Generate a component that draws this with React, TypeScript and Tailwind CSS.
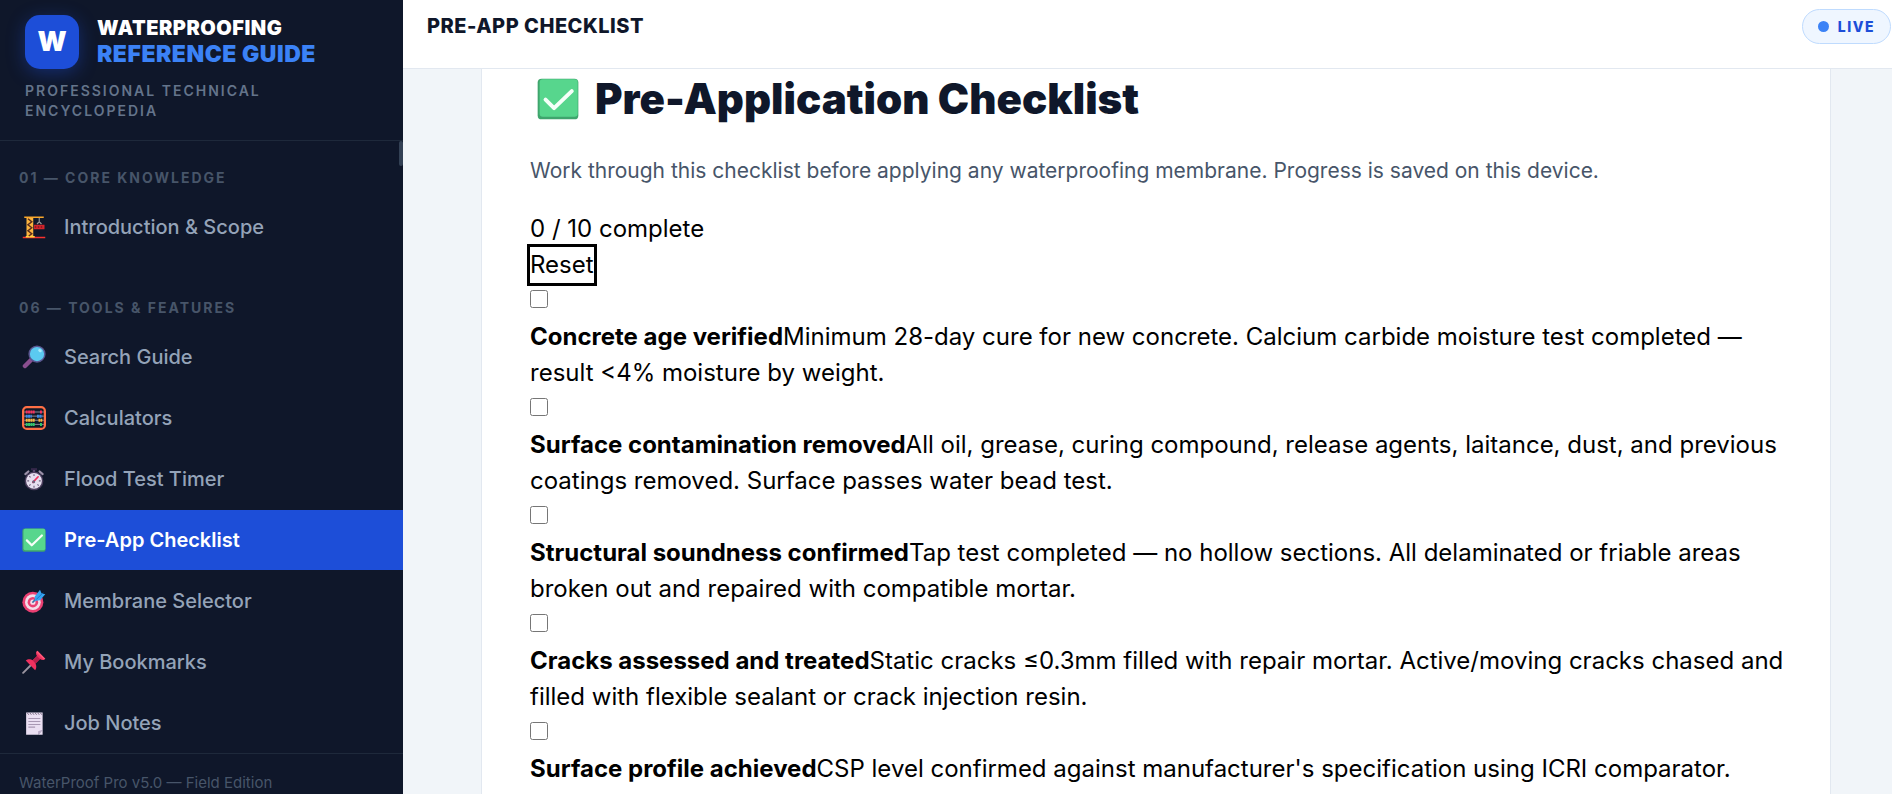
import { useState } from 'react'

const CraneIcon = () => (
  <svg className="w-6 h-6" viewBox="0 0 32 32" aria-hidden="true">
    <path d="M1 29h30v2H1z" fill="#f8312f" />
    <path d="M5 28h12v2H5z" fill="#fcd53f" />
    <path d="M6 3h9v25H6z" fill="#fcb53f" />
    <path d="M8 5l5 4-5 4 5 4-5 4 5 4-4 3" fill="none" stroke="#5a2e1a" strokeWidth="2" />
    <path d="M3 2h26v2H3z" fill="#f9a72b" />
    <path d="M23 4v5m-3 3l3-3 3 3" fill="none" stroke="#9b9b9b" strokeWidth="1.5" />
    <path d="M16 13h14v6H16z" fill="#d3242b" />
    <path d="M17 16h12" stroke="#7b1820" strokeWidth="2" strokeDasharray="2 2" />
  </svg>
)

const SearchIcon = () => (
  <svg className="w-6 h-6" viewBox="0 0 32 32" aria-hidden="true">
    <path d="M4 28l9-9" stroke="#8a4f8f" strokeWidth="6" strokeLinecap="round" />
    <path d="M12 20l3-3" stroke="#6b4a91" strokeWidth="3" />
    <circle cx="20" cy="12" r="11.5" fill="#5a5791" />
    <circle cx="20" cy="12" r="9.5" fill="#5bcaf0" />
    <ellipse cx="24" cy="7.5" rx="2.5" ry="2" fill="#a9ecfb" transform="rotate(35 24 7.5)" />
  </svg>
)

const AbacusIcon = () => (
  <svg className="w-6 h-6" viewBox="0 0 32 32" aria-hidden="true">
    <rect x="1.5" y="1.5" width="29" height="29" rx="5" fill="#111827" stroke="#ff6f45" strokeWidth="3" />
    <path d="M3 8h26M3 13.5h26M3 19h26M3 24.5h26" stroke="#b4acbc" strokeWidth="1" />
    <path d="M5 8h12m7 0h3" stroke="#f8315f" strokeWidth="4" strokeDasharray="2.6 .5" />
    <path d="M5 13.5h8m7 0h7" stroke="#3f8ce8" strokeWidth="4" strokeDasharray="2.6 .5" />
    <path d="M5 19h12m5 0h5" stroke="#fcb53f" strokeWidth="4" strokeDasharray="2.6 .5" />
    <path d="M5 24.5h12m7 0h3" stroke="#2fc96b" strokeWidth="4" strokeDasharray="2.6 .5" />
  </svg>
)

const StopwatchIcon = () => (
  <svg className="w-6 h-6" viewBox="0 0 32 32" aria-hidden="true">
    <path d="M12 1.5h8v3h-8z" fill="#35284a" />
    <path d="M14.5 4h3v4h-3z" fill="#5a4a70" />
    <path d="M4.5 9.5l4-3.500M27.500 9.500l-4-3.500" stroke="#9a90a8" strokeWidth="3" strokeLinecap="round" />
    <circle cx="16" cy="18.5" r="12.5" fill="#4a3d5c" />
    <circle cx="16" cy="18.5" r="10.5" fill="#e6dff0" />
    <path d="M16 9.5v2.5M16 25v2.5M7 18.5h2.5M22.5 18.5H25M9.7 12.2l1.7 1.7M9.7 24.8l1.7-1.7M22.3 24.8l-1.7-1.7" stroke="#70607f" strokeWidth="1.5" />
    <path d="M14.5 20.5l7-7.5" stroke="#f0335f" strokeWidth="2.2" strokeLinecap="round" />
    <circle cx="15.5" cy="19.5" r="2" fill="#70607f" />
  </svg>
)

const CheckIcon = ({ className = 'w-6 h-6' }: { className?: string }) => (
  <svg className={className} viewBox="0 0 32 32" aria-hidden="true">
    <rect x="0.5" y="0.5" width="31" height="31" rx="3" fill="#3fa56d" />
    <rect x="2" y="1" width="29" height="28.5" rx="2.5" fill="#57d68d" />
    <path d="M6.5 16.500l6.500 6.500L26.500 10" fill="none" stroke="#f6fff9" strokeWidth="3" strokeLinecap="round" strokeLinejoin="round" />
  </svg>
)

const TargetIcon = () => (
  <svg className="w-6 h-6" viewBox="0 0 32 32" aria-hidden="true">
    <circle cx="14.5" cy="17.5" r="14" fill="#ea3f72" />
    <circle cx="14.5" cy="17.5" r="10.5" fill="#f3dce8" />
    <circle cx="14.5" cy="17.5" r="7" fill="#ea3f72" />
    <circle cx="14.5" cy="17.5" r="3.5" fill="#f3dce8" />
    <path d="M14.5 17.5l8-8" stroke="#346fa5" strokeWidth="2" strokeLinecap="round" />
    <path d="M17 10l7-9 2 4.500L31 7l-7 8-7 1z" fill="#35a5f2" />
    <path d="M19 14l9-9" stroke="#1c72bf" strokeWidth="1.2" />
  </svg>
)

const PinIcon = () => (
  <svg className="w-6 h-6" viewBox="0 0 32 32" aria-hidden="true">
    <path d="M1.5 30.500L13 19" stroke="#9b95a0" strokeWidth="2.5" strokeLinecap="round" />
    <path d="M5 14c3-2.500 7-1.500 9-.5L20 8c-2-3-1.500-5.500.5-7L31 11.500c-1.500 2-4 2.500-7 .5l-6 6c1.500 3 1.500 6.500-.5 9z" fill="#f0315f" />
    <path d="M20.500 1L31 11.500l-2 1L19 3z" fill="#ff5878" />
    <path d="M14.500 14l5.500-6 4 4-6 6z" fill="#b91e4a" />
  </svg>
)

const NotesIcon = () => (
  <svg className="w-6 h-6" viewBox="0 0 32 32" aria-hidden="true">
    <path d="M5.5 2h22v23l-6 6.500h-16z" fill="#eadff2" />
    <path d="M27.500 25v6.500h-6z" fill="#eadff2" />
    <path d="M21.500 31.500V27l6-2z" fill="#b9a9c6" />
    <path d="M7 2.500l2 2.500m1.500-2.500l2 2.500M14 2.500L16 5m1.500-2.500l2 2.500M21 2.500L23 5m1.500-2.500l2 2.500" stroke="#6f6379" strokeWidth="1.2" />
    <path d="M8.500 10h16M8.500 14h16M8.500 18h16M8.500 21.500h9" stroke="#a898b3" strokeWidth="1.4" />
  </svg>
)

const sections = [
  {
    label: '01 — Core Knowledge',
    items: [{ name: 'Introduction & Scope', icon: <CraneIcon /> }],
  },
  {
    label: '06 — Tools & Features',
    items: [
      { name: 'Search Guide', icon: <SearchIcon /> },
      { name: 'Calculators', icon: <AbacusIcon /> },
      { name: 'Flood Test Timer', icon: <StopwatchIcon /> },
      { name: 'Pre-App Checklist', icon: <CheckIcon />, active: true },
      { name: 'Membrane Selector', icon: <TargetIcon /> },
      { name: 'My Bookmarks', icon: <PinIcon /> },
      { name: 'Job Notes', icon: <NotesIcon /> },
    ],
  },
]

const checks = [
  {
    title: 'Concrete age verified',
    text: 'Minimum 28-day cure for new concrete. Calcium carbide moisture test completed — result <4% moisture by weight.',
  },
  {
    title: 'Surface contamination removed',
    text: 'All oil, grease, curing compound, release agents, laitance, dust, and previous coatings removed. Surface passes water bead test.',
  },
  {
    title: 'Structural soundness confirmed',
    text: 'Tap test completed — no hollow sections. All delaminated or friable areas broken out and repaired with compatible mortar.',
  },
  {
    title: 'Cracks assessed and treated',
    text: 'Static cracks ≤0.3mm filled with repair mortar. Active/moving cracks chased and filled with flexible sealant or crack injection resin.',
  },
  {
    title: 'Surface profile achieved',
    text: "CSP level confirmed against manufacturer's specification using ICRI comparator.",
  },
]

function Sidebar() {
  return (
    <aside className="relative flex w-[403px] shrink-0 flex-col bg-[#0f172a]">
      <div className="border-b border-[#1e293b] px-[25px] pt-[15px] pb-[19px]">
        <div className="flex items-start gap-[18px]">
          <div className="flex size-[54px] items-center justify-center rounded-[15px] bg-[#1d4ed8] text-[27px] font-black text-white shadow-[0_4px_18px_rgba(29,78,216,0.4)]">
            W
          </div>
          <div className="font-black">
            <div className="text-[20px] leading-[26px] tracking-[0.5px] text-white">WATERPROOFING</div>
            <div className="text-[23px] leading-[26px] tracking-[0.5px] text-[#3b82f6]">REFERENCE GUIDE</div>
          </div>
        </div>
        <p className="mt-3 text-[14px] leading-5 font-semibold tracking-[2px] text-[#64748b] uppercase">
          Professional Technical Encyclopedia
        </p>
      </div>

      <nav className="min-h-0 flex-1 overflow-hidden">
        {sections.map((section) => (
          <div key={section.label} className="mb-[14px]">
            <h2 className="px-[19px] pt-[26px] pb-2 text-[14px] leading-[22px] font-bold tracking-[2px] text-[#475569] uppercase">
              {section.label}
            </h2>
            {section.items.map((item) => (
              <a
                key={item.name}
                href="#"
                className={
                  item.active
                    ? 'mb-px flex h-[60px] items-center gap-[18px] bg-[#1d4ed8] px-[22px] text-[20px] font-semibold text-white'
                    : 'mb-px flex h-[60px] items-center gap-[18px] px-[22px] text-[20px] font-medium text-[#94a3b8]'
                }
              >
                {item.icon}
                {item.name}
              </a>
            ))}
          </div>
        ))}
      </nav>

      {/* scroll thumb */}
      <div className="absolute top-[141px] right-0 h-[25px] w-1 rounded-sm bg-[#334155]" />

      <div className="border-t border-[#1e293b] px-[19px] pt-[18px] text-[15px] leading-[22px] text-[#475569]">
        WaterProof Pro v5.0 — Field Edition
      </div>
    </aside>
  )
}

export default function App() {
  const [done, setDone] = useState<boolean[]>(Array(10).fill(false))
  const count = done.filter(Boolean).length

  const toggle = (index: number) => {
    setDone(done.map((value, i) => (i === index ? !value : value)))
  }

  return (
    <div className="flex h-screen overflow-hidden bg-[#f1f5f9] font-['Inter',sans-serif]">
      <Sidebar />

      <div className="flex min-w-0 flex-1 flex-col">
        <header className="flex items-start justify-between border-b border-[#e2e8f0] bg-white pt-[9px] pb-6 pl-6">
          <h2 className="text-[20px] leading-[34px] font-extrabold tracking-[0.5px] text-[#0f172a] uppercase">
            Pre-App Checklist
          </h2>
          <span className="mr-px flex h-[35px] items-center gap-[9px] rounded-full border border-[#bfdbfe] bg-[#eff6ff] px-[15px] text-[14px] font-extrabold tracking-[1.5px] text-[#1d4ed8]">
            <span className="size-[11px] rounded-full bg-[#3b82f6]" />
            LIVE
          </span>
        </header>

        <main className="min-h-0 flex-1 overflow-hidden pr-[61px] pl-[78px]">
          <div className="min-h-full border-x border-[#e2e8f0] bg-white pr-10 pl-12">
            <h1 className="flex items-center gap-4 pt-1 pl-[7px] text-[42px] leading-[52px] font-black text-[#0f172a]">
              <CheckIcon className="size-[42px]" />
              Pre-Application Checklist
            </h1>
            <p className="mt-[29px] mb-[23px] text-[21px] leading-[34px] text-[#475569]">
              Work through this checklist before applying any waterproofing membrane. Progress is saved on this device.
            </p>

            <div className="text-[24px] leading-[36px] text-black">
              <div>{count} / 10 complete</div>
              <button
                type="button"
                onClick={() => setDone(Array(10).fill(false))}
                className="block outline-3 outline-black"
              >
                Reset
              </button>
              {checks.map((check, i) => (
                <label key={check.title} className="block">
                  <span className="flex h-9 items-start pt-[7px]">
                    <input
                      type="checkbox"
                      checked={done[i]}
                      onChange={() => toggle(i)}
                      className="size-[18px]"
                    />
                  </span>
                  <strong className="font-bold">{check.title}</strong>
                  {check.text}
                </label>
              ))}
            </div>
          </div>
        </main>
      </div>
    </div>
  )
}
